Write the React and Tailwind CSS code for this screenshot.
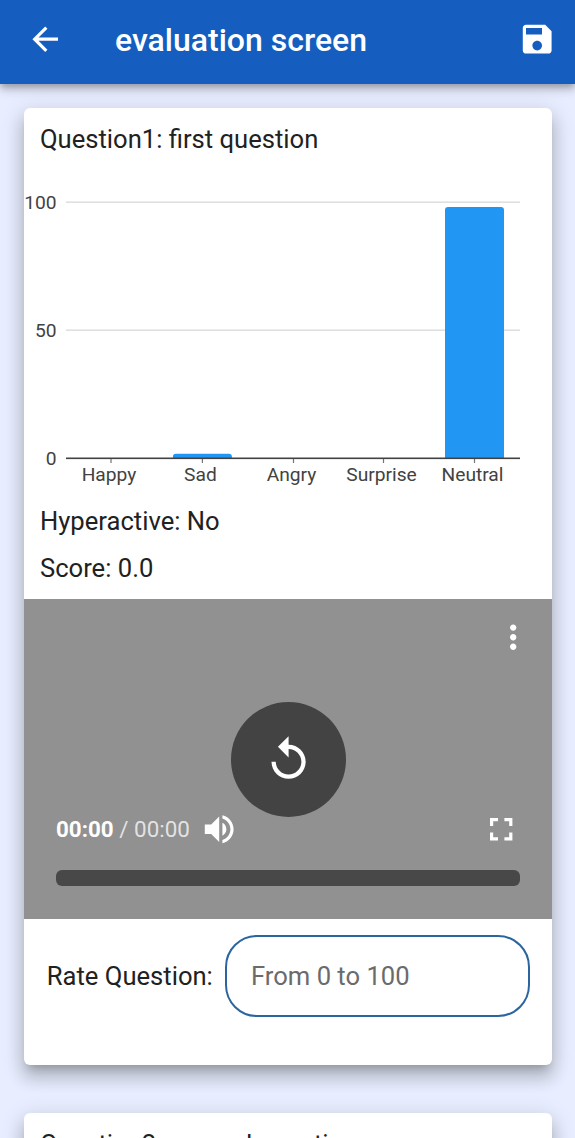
import React from 'react';

const ICONS = {
  back: 'M20 11H7.83l5.59-5.59L12 4l-8 8 8 8 1.41-1.41L7.83 13H20v-2z',
  save: 'M17 3H5c-1.11 0-2 .9-2 2v14c0 1.1.89 2 2 2h14c1.1 0 2-.9 2-2V7l-4-4zm-5 16c-1.66 0-3-1.34-3-3s1.34-3 3-3 3 1.34 3 3-1.34 3-3 3zm3-10H5V5h10v4z',
  more: 'M12 8c1.1 0 2-.9 2-2s-.9-2-2-2-2 .9-2 2 .9 2 2 2zm0 2c-1.1 0-2 .9-2 2s.9 2 2 2 2-.9 2-2-.9-2-2-2zm0 6c-1.1 0-2 .9-2 2s.9 2 2 2 2-.9 2-2-.9-2-2-2z',
  replay: 'M12 5V1L7 6l5 5V7c3.31 0 6 2.69 6 6s-2.69 6-6 6-6-2.69-6-6H4c0 4.42 3.58 8 8 8s8-3.58 8-8-3.58-8-8-8z',
  volume: 'M3 9v6h4l5 5V4L7 9H3zm13.5 3c0-1.77-1.02-3.29-2.5-4.03v8.05c1.48-.73 2.5-2.25 2.5-4.02zM14 3.23v2.06c2.89.86 5 3.54 5 6.71s-2.11 5.85-5 6.71v2.06c4.01-.91 7-4.49 7-8.77s-2.99-7.86-7-8.77z',
  fullscreen: 'M7 14H5v5h5v-2H7v-3zm-2-4h2V7h3V5H5v5zm12 7h-3v2h5v-5h-2v3zM14 5v2h3v3h2V5h-5z',
};

function Icon({ name, className }) {
  return (
    <svg viewBox="0 0 24 24" fill="currentColor" className={className}>
      <path d={ICONS[name]} />
    </svg>
  );
}

function Card({ children, className = '' }) {
  return (
    <section
      className={`mr-[23px] ml-6 shrink-0 overflow-hidden rounded-[6px] bg-white shadow-[0_8px_8px_-5px_rgba(0,0,0,0.2),0_13px_16px_2px_rgba(0,0,0,0.14),0_5px_22px_3px_rgba(0,0,0,0.12)] ${className}`}
    >
      {children}
    </section>
  );
}

const BARS = [
  { label: 'Happy', value: 0, x: 111 },
  { label: 'Sad', value: 1.7, x: 202.4 },
  { label: 'Angry', value: 0, x: 293.5 },
  { label: 'Surprise', value: 0, x: 383.5 },
  { label: 'Neutral', value: 98, x: 474.5 },
];

function EmotionChart() {
  return (
    <svg viewBox="24 170 528 328" className="block h-[328px] w-[528px] font-['Roboto',sans-serif] text-[19.2px]">
      {[100, 50].map((v) => (
        <rect key={v} x="66" y={457.5 - v * 2.56 - 0.1} width="454" height="1.6" fill="#e0e0e0" />
      ))}
      {[100, 50, 0].map((v) => (
        <text key={v} x="56.5" y={465 - v * 2.56} textAnchor="end" fill="#424242">{v}</text>
      ))}
      {BARS.map((b) => {
        const top = 458 - b.value * 2.56;
        return (
          <g key={b.label}>
            {b.value > 0 && (
              <path
                d={`M${b.x - 29.5} 458V${top + 3}q0 -3 3 -3h53q3 0 3 3V458z`}
                fill="#2196f3"
              />
            )}
            <rect x={b.x - 0.6} y="459" width="1.2" height="4" fill="#757575" />
            <text x={b.x - 2} y="481" textAnchor="middle" fill="#424242">{b.label}</text>
          </g>
        );
      })}
      <rect x="66" y="457.5" width="454" height="1.6" fill="#424242" />
    </svg>
  );
}

function VideoPlayer() {
  return (
    <div className="relative flex h-80 flex-col justify-between bg-[#919191] text-white">
      <div className="flex justify-end pt-[19px] pr-[19.4px]">
        <Icon name="more" className="size-[38.4px]" />
      </div>
      <div className="px-8 pb-[33px]">
        <div className="flex items-center">
          <span className="text-[22.4px] leading-none font-bold">00:00</span>
          <span className="text-[22.4px] leading-none whitespace-pre text-white/75"> / 00:00</span>
          <Icon name="volume" className="ml-[10px] size-[38.4px]" />
          <Icon name="fullscreen" className="ml-auto size-[38.4px]" />
        </div>
        <div className="mt-[22px] h-4 rounded-[6px] bg-[#484848]" />
      </div>
      <div className="absolute top-[102.5px] left-[206.5px] flex size-[115.2px] items-center justify-center rounded-full bg-[#434343]">
        <Icon name="replay" className="size-[51.2px]" />
      </div>
    </div>
  );
}

export default function App() {
  return (
    <div className="flex h-[1138px] w-[575px] flex-col overflow-hidden bg-[#e8eeff] font-['Roboto',sans-serif] text-[25.6px] text-[#212121]">
      <header className="relative flex h-[84px] shrink-0 items-center bg-[#155dbf] pr-[18.6px] pb-[5px] pl-[25.6px] text-white shadow-[0_3px_6px_-1px_rgba(0,0,0,0.2),0_6px_8px_0_rgba(0,0,0,0.14),0_2px_16px_0_rgba(0,0,0,0.12)]">
        <Icon name="back" className="size-[38.4px]" />
        <h1 className="ml-[51px] pt-px text-[32px] leading-none font-medium">evaluation screen</h1>
        <Icon name="save" className="ml-auto size-[38.4px]" />
      </header>

      <Card className="mt-6 h-[957px]">
        <h2 className="flex h-[62px] items-center px-4">Question1: first question</h2>
        <EmotionChart />
        <div className="flex h-[101px] flex-col gap-[17px] px-4 pt-2 leading-[30px]">
          <p>Hyperactive: No</p>
          <p>Score: 0.0</p>
        </div>
        <VideoPlayer />
        <div className="flex items-center pt-4 pr-[22px] pl-[22.8px]">
          <label htmlFor="rate" className="shrink-0">Rate Question:</label>
          <input
            id="rate"
            placeholder="From 0 to 100"
            className="ml-auto h-[82px] w-[305px] rounded-[32px] border-2 border-[#2b65a0] bg-white px-6 placeholder:text-[#6b6b6b] placeholder:opacity-100"
          />
        </div>
      </Card>

      <Card className="mt-12 h-[957px]">
        <h2 className="flex h-[62px] items-center px-4">Question2: second question</h2>
      </Card>
    </div>
  );
}
